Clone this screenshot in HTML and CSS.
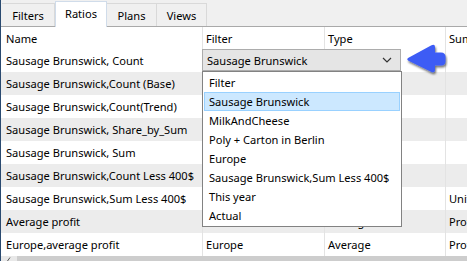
FILE: index.html
```html
<!DOCTYPE html>
<html lang="en">
    <head>
        <meta charset="UTF-8">
        <title>Ratios</title>
        <link rel="stylesheet" href="styles.css">
    </head>
    <body>
        <div id="window">
            <div class="tabs">
                <span class="tab">Filters</span>
                <span class="tab selected">Ratios</span>
                <span class="tab">Plans</span>
                <span class="tab">Views</span>
            </div>
            <div class="grid">
                <div class="row header">
                    <span>Name</span><span>Filter</span><span>Type</span><span>Sum</span>
                </div>
                <div class="row"><span>Sausage Brunswick, Count</span><span></span><span></span><span></span></div>
                <div class="row alt"><span>Sausage Brunswick,Count (Base)</span><span></span><span></span><span></span></div>
                <div class="row"><span>Sausage Brunswick,Count(Trend)</span><span></span><span></span><span></span></div>
                <div class="row alt"><span>Sausage Brunswick, Share_by_Sum</span><span></span><span></span><span></span></div>
                <div class="row"><span>Sausage Brunswick, Sum</span><span></span><span></span><span></span></div>
                <div class="row alt"><span>Sausage Brunswick,Count Less 400$</span><span></span><span></span><span></span></div>
                <div class="row"><span>Sausage Brunswick,Sum Less 400$</span><span></span><span></span><span>Units</span></div>
                <div class="row alt"><span>Average profit</span><span></span><span>Average</span><span>Profit</span></div>
                <div class="row"><span>Europe,average profit</span><span>Europe</span><span>Average</span><span>Profit</span></div>

                <div class="combo">
                    <span>Sausage Brunswick</span>
                    <svg width="10" height="6" viewBox="0 0 10 6"><polyline points="1,1 5,5 9,1" fill="none" stroke="#333" stroke-width="1.2"/></svg>
                </div>
                <ul class="dropdown">
                    <li>Filter</li>
                    <li class="hover">Sausage Brunswick</li>
                    <li>MilkAndCheese</li>
                    <li>Poly + Carton in Berlin</li>
                    <li>Europe</li>
                    <li>Sausage Brunswick,Sum Less 400$</li>
                    <li>This year</li>
                    <li>Actual</li>
                </ul>
                <svg class="pointer" width="46" height="38" viewBox="402 38 46 38">
                    <defs>
                        <filter id="shadow" x="-20%" y="-20%" width="150%" height="160%">
                            <feDropShadow dx="1" dy="2" stdDeviation="1.2" flood-color="#000" flood-opacity="0.55"/>
                        </filter>
                    </defs>
                    <path d="M408.5 57.8 Q406 59.3 408.5 60.8 L431 71.8 Q435 73.5 435 70 L435 65.5 L441 65.5 Q445.5 65.5 445.5 61 L445.5 57 Q445.5 52.5 441 52.5 L435 52.5 L435 47 Q435 43.5 431 45.5 Z" fill="#3d5cf5" filter="url(#shadow)"/>
                </svg>
            </div>
            <div class="hscroll">
                <span class="arrow"><svg width="6" height="8" viewBox="0 0 6 8"><polyline points="4,0.5 1.5,4 4,7.5" fill="none" stroke="#555" stroke-width="1"/></svg></span>
                <span class="thumb"></span>
            </div>
        </div>
    </body>
</html>
```
FILE: styles.css
```css
body {
    margin: 0;
    padding: 0;
    font-family: "Noto Sans", "Open Sans", sans-serif;
    font-size: 11.1px;
    color: #000;
    background-color: #fff;
}

div#window {
    width: 467px;
    height: 261px;
    overflow: hidden;
    border-left: 1px solid #2a4a70;
    box-sizing: border-box;
    display: flex;
    flex-direction: column;
}

.tabs {
    display: flex;
    align-items: flex-end;
    height: 27px;
    padding-left: 1px;
    background-color: #f0f0f0;
    border-bottom: 1px solid #a9a9a9;
    box-sizing: border-box;
}

.tab {
    height: 23px;
    width: 50px;
    display: flex;
    align-items: center;
    justify-content: center;
    border: 1px solid #d9d9d9;
    border-bottom: 0;
    border-left: 0;
    box-sizing: border-box;
}

.tab:first-child {
    width: 53px;
}

.tab.selected {
    height: 26px;
    width: 52px;
    background-color: #fff;
    border: 1px solid #d0dcea;
    border-bottom: 0;
    margin-bottom: -1px;
    padding-bottom: 2px;
}

.grid {
    position: relative;
    flex-grow: 1;
}

.row {
    display: grid;
    grid-template-columns: 201px 122px 121px 1fr;
    height: 23px;
    align-items: center;
}

.row.header {
    height: 22px;
}

.row.alt {
    background-color: #ececec;
}

.row span {
    height: 100%;
    display: flex;
    align-items: center;
    padding-left: 5px;
    white-space: nowrap;
    overflow: hidden;
}

.row span + span {
    border-left: 1px solid #e3e3e3;
    padding-left: 3px;
}

.combo {
    position: absolute;
    left: 201px;
    top: 22px;
    width: 199px;
    height: 22px;
    box-sizing: border-box;
    background-color: #e5e5e5;
    border: 1px solid #acacac;
    display: flex;
    align-items: center;
    justify-content: space-between;
    padding: 0 8px 0 4px;
}

.dropdown {
    position: absolute;
    left: 201px;
    top: 44px;
    width: 200px;
    margin: 0;
    padding: 1px;
    list-style: none;
    background-color: #fff;
    border: 1px solid #828282;
    box-sizing: border-box;
}

.dropdown li {
    height: 19px;
    line-height: 17px;
    padding-left: 4px;
    border: 1px solid transparent;
    box-sizing: border-box;
    white-space: nowrap;
}

.dropdown li.hover {
    background-color: #cce8ff;
    border-color: #99d1ff;
}

.pointer {
    position: absolute;
    left: 401px;
    top: 11px;
}

.hscroll {
    height: 5px;
    display: flex;
    background-color: #e8e8e8;
    overflow: hidden;
}

.hscroll .arrow {
    width: 16px;
    display: flex;
    justify-content: center;
    padding-top: 1px;
}

.hscroll .thumb {
    flex-grow: 1;
    background-color: #cdcdcd;
}
```
